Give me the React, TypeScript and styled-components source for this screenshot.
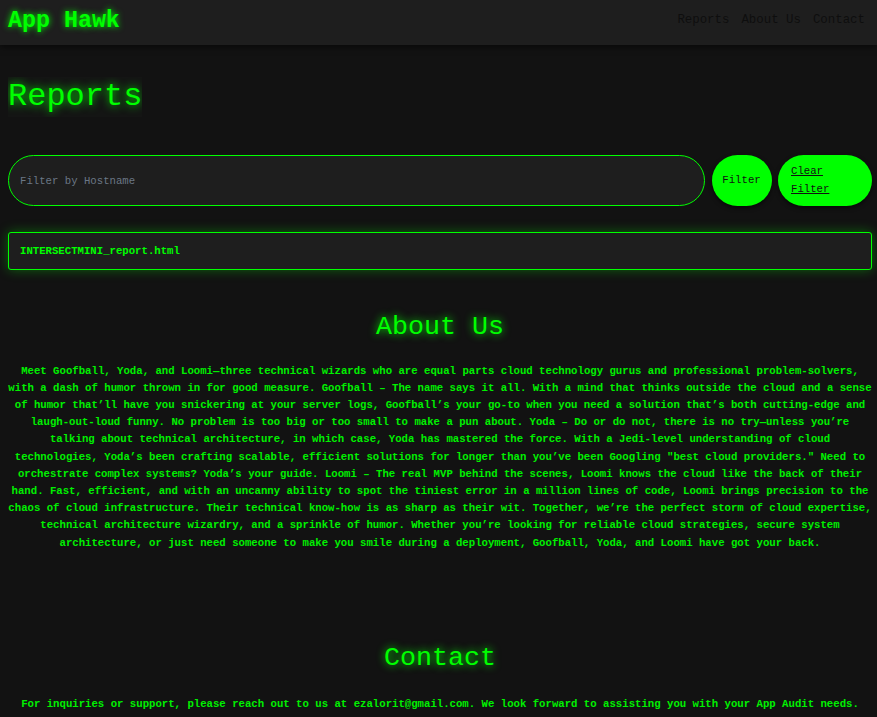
import React from "react";
import styled, { createGlobalStyle } from "styled-components";

const GlobalStyle = createGlobalStyle`
  html, body {
    margin: 0;
    padding: 0;
    background: #121212;
    color: #00ff00;
    font-family: "Liberation Mono", "Courier New", monospace;
  }
  * { box-sizing: border-box; }
`;

const Header = styled.header`
  height: 45px;
  background: #1e1e1e;
  box-shadow: 0 2px 6px rgba(0, 0, 0, 0.55);
  display: flex;
  align-items: flex-start;
  justify-content: space-between;
  padding: 0 12px 0 8px;
  position: relative;
`;

const Logo = styled.div`
  font-size: 23.3px;
  font-weight: bold;
  line-height: 28px;
  margin-top: 7px;
  color: #00ff00;
  text-shadow: 0 0 6px #00ff00;
`;

const Nav = styled.nav`
  display: flex;
  gap: 12px;
  margin-top: 12px;
`;

const NavLink = styled.a`
  font-size: 12.4px;
  line-height: 16px;
  color: #0e0e0e;
  text-decoration: none;
`;

const Main = styled.main`
  padding: 0 5px 0 8px;
`;

const PageTitle = styled.h1`
  display: inline-block;
  overflow: hidden;
  margin: 32px 0 33px;
  font-size: 32px;
  line-height: 40px;
  font-weight: normal;
  color: #00ff00;
  text-shadow: 0 0 10px #00ff00;
  background: #141514;
`;

const FilterRow = styled.div`
  display: flex;
  gap: 6.5px;
  height: 51px;
`;

const FilterInput = styled.input`
  flex: 1;
  height: 51px;
  border: 1px solid #00ff00;
  border-radius: 26px;
  background: #1e1e1e;
  padding: 0 11px;
  font-family: "Liberation Mono", "Courier New", monospace;
  font-size: 10.67px;
  color: #00ff00;
  outline: none;
  &::placeholder {
    color: #6b7785;
  }
`;

const Button = styled.button<{ $wide?: boolean }>`
  flex: none;
  width: ${(p) => (p.$wide ? "94px" : "60px")};
  height: 51px;
  border: none;
  border-radius: 26px;
  background: #00ff00;
  color: #111;
  font-family: "Liberation Mono", "Courier New", monospace;
  font-size: 10.67px;
  line-height: 18px;
  text-align: ${(p) => (p.$wide ? "left" : "center")};
  padding: 0 ${(p) => (p.$wide ? "13px" : "4px")} 2px;
  text-decoration: ${(p) => (p.$wide ? "underline" : "none")};
  box-shadow: 0 2px 4px rgba(0, 0, 0, 0.6);
  cursor: pointer;
`;

const ReportItem = styled.div`
  margin-top: 26px;
  height: 38px;
  display: flex;
  align-items: center;
  border: 1px solid #00ff00;
  border-radius: 3px;
  background: #1e1e1e;
  padding: 0 11px;
  font-size: 10.67px;
  font-weight: bold;
  color: #00ff00;
  box-shadow: 0 0 12px rgba(0, 255, 0, 0.35);
`;

const Section = styled.section<{ $top: number }>`
  margin-top: ${(p) => p.$top}px;
  text-align: center;
`;

const SectionTitle = styled.h2<{ $gap: number }>`
  margin: 0 0 ${(p) => p.$gap}px;
  font-size: 26.67px;
  line-height: 32px;
  font-weight: normal;
  color: #00ff00;
  text-shadow: 0 0 8px #00ff00;
`;

const Paragraph = styled.p`
  margin: 0;
  font-size: 10.67px;
  line-height: 17.2px;
  font-weight: bold;
  color: #00f000;
`;

const Email = styled.strong`
  font-weight: bold;
`;

export default function App() {
  return (
    <>
      <GlobalStyle />
      <Header>
        <Logo>App Hawk</Logo>
        <Nav>
          <NavLink href="#reports">Reports</NavLink>
          <NavLink href="#about">About Us</NavLink>
          <NavLink href="#contact">Contact</NavLink>
        </Nav>
      </Header>
      <Main>
        <PageTitle id="reports">Reports</PageTitle>
        <FilterRow>
          <FilterInput placeholder="Filter by Hostname" />
          <Button>Filter</Button>
          <Button $wide>Clear Filter</Button>
        </FilterRow>
        <ReportItem>INTERSECTMINI_report.html</ReportItem>
        <Section id="about" $top={41}>
          <SectionTitle $gap={19.5}>About Us</SectionTitle>
          <Paragraph>
            Meet Goofball, Yoda, and Loomi—three technical wizards who are equal parts cloud
            technology gurus and professional problem-solvers, with a dash of humor thrown in for
            good measure. Goofball – The name says it all. With a mind that thinks outside the cloud
            and a sense of humor that’ll have you snickering at your server logs, Goofball’s your
            go-to when you need a solution that’s both cutting-edge and laugh-out-loud funny. No
            problem is too big or too small to make a pun about. Yoda – Do or do not, there is no
            try—unless you’re talking about technical architecture, in which case, Yoda has mastered
            the force. With a Jedi-level understanding of cloud technologies, Yoda’s been crafting
            scalable, efficient solutions for longer than you’ve been Googling "best cloud
            providers." Need to orchestrate complex systems? Yoda’s your guide. Loomi – The real MVP
            behind the scenes, Loomi knows the cloud like the back of their hand. Fast, efficient,
            and with an uncanny ability to spot the tiniest error in a million lines of code, Loomi
            brings precision to the chaos of cloud infrastructure. Their technical know-how is as
            sharp as their wit. Together, we’re the perfect storm of cloud expertise, technical
            architecture wizardry, and a sprinkle of humor. Whether you’re looking for reliable
            cloud strategies, secure system architecture, or just need someone to make you smile
            during a deployment, Goofball, Yoda, and Loomi have got your back.
          </Paragraph>
        </Section>
        <Section id="contact" $top={90.5}>
          <SectionTitle $gap={21.5}>Contact</SectionTitle>
          <Paragraph>
            For inquiries or support, please reach out to us at <Email>ezalorit@gmail.com</Email>.
            We look forward to assisting you with your App Audit needs.
          </Paragraph>
        </Section>
      </Main>
    </>
  );
}
